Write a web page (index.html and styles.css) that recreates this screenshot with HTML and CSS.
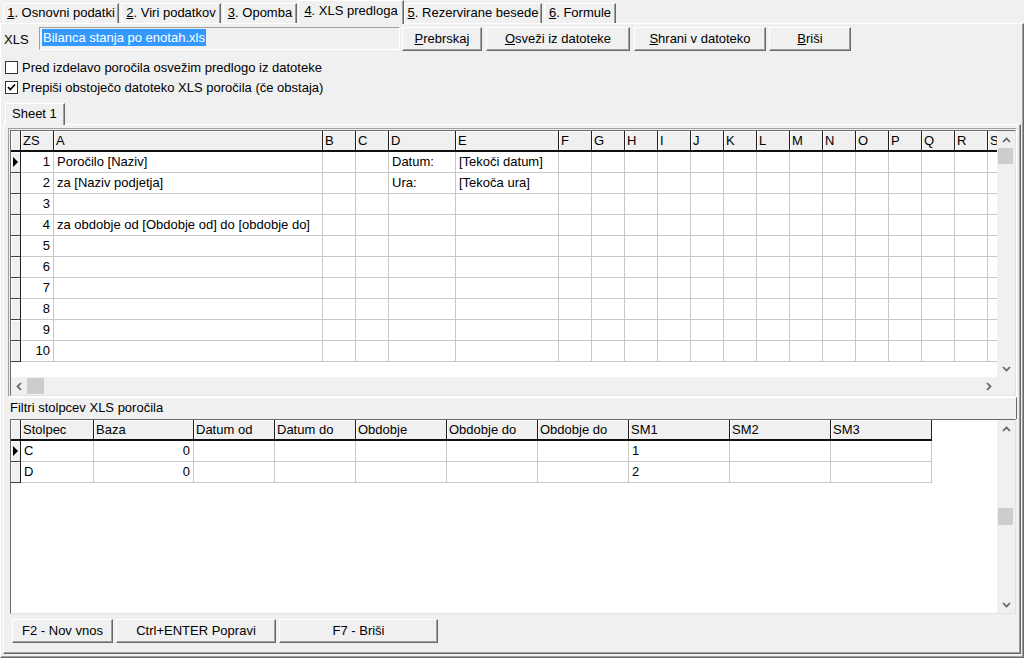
FILE: index.html
```html
<!DOCTYPE html>
<html lang="sl">
<head>
<meta charset="utf-8">
<title>XLS predloga</title>
<link rel="stylesheet" href="styles.css">
</head>
<body>
<div class="app">
  <div class="tabs">
    <div class="tab t1"><u>1</u>. Osnovni podatki</div>
    <div class="tab t2"><u>2</u>. Viri podatkov</div>
    <div class="tab t3"><u>3</u>. Opomba</div>
    <div class="tab t4 active"><u>4</u>. XLS predloga</div>
    <div class="tab t5"><u>5</u>. Rezervirane besede</div>
    <div class="tab t6"><u>6</u>. Formule</div>
  </div>
  <div class="page">
    <div class="xls-row">
      <span class="xls-label">XLS</span>
      <div class="edit"><span class="sel">Bilanca stanja po enotah.xls</span></div>
      <div class="btn b-prebrskaj"><u>P</u>rebrskaj</div>
      <div class="btn b-osvezi"><u>O</u>sveži iz datoteke</div>
      <div class="btn b-shrani"><u>S</u>hrani v datoteko</div>
      <div class="btn b-brisi"><u>B</u>riši</div>
    </div>
    <div class="checks">
      <div class="chk"><span class="box"></span>Pred izdelavo poročila osvežim predlogo iz datoteke</div>
      <div class="chk"><span class="box"><svg width="11" height="11" viewBox="0 0 11 11"><path d="M2 5 L4.3 7.5 L9 2.5" fill="none" stroke="#000" stroke-width="1.8"/></svg></span>Prepiši obstoječo datoteko XLS poročila (če obstaja)</div>
    </div>
    <div class="sheet-ctrl">
      <div class="sheet-tabs"><div class="stab">Sheet 1</div></div>
      <div class="sheet-body">
        <div class="grid1">
          <div class="g-pad">
            <div class="g1-inner">
              <div class="cells">
                <table class="dg dg1">
                  <colgroup>
                    <col class="c-ind"><col class="c33"><col class="c-a"><col class="c33"><col class="c33"><col class="c-d"><col class="c-e">
                    <col class="c33"><col class="c33"><col class="c33"><col class="c33"><col class="c33"><col class="c33"><col class="c33">
                    <col class="c33"><col class="c33"><col class="c33"><col class="c33"><col class="c33"><col class="c33"><col class="c33">
                  </colgroup>
                  <thead>
                    <tr><th class="ind"></th><th>ZS</th><th>A</th><th>B</th><th>C</th><th>D</th><th>E</th><th>F</th><th>G</th><th>H</th><th>I</th><th>J</th><th>K</th><th>L</th><th>M</th><th>N</th><th>O</th><th>P</th><th>Q</th><th>R</th><th>S</th></tr>
                  </thead>
                  <tbody>
                    <tr><td class="ind"><svg class="tri" width="5" height="10" viewBox="0 0 5 10"><polygon points="0,0 5,5 0,10" fill="#000"/></svg></td><td class="num">1</td><td>Poročilo [Naziv]</td><td></td><td></td><td>Datum:</td><td>[Tekoči datum]</td><td></td><td></td><td></td><td></td><td></td><td></td><td></td><td></td><td></td><td></td><td></td><td></td><td></td><td></td></tr>
                    <tr><td class="ind"></td><td class="num">2</td><td>za [Naziv podjetja]</td><td></td><td></td><td>Ura:</td><td>[Tekoča ura]</td><td></td><td></td><td></td><td></td><td></td><td></td><td></td><td></td><td></td><td></td><td></td><td></td><td></td><td></td></tr>
                    <tr><td class="ind"></td><td class="num">3</td><td></td><td></td><td></td><td></td><td></td><td></td><td></td><td></td><td></td><td></td><td></td><td></td><td></td><td></td><td></td><td></td><td></td><td></td><td></td></tr>
                    <tr><td class="ind"></td><td class="num">4</td><td>za obdobje od [Obdobje od] do [obdobje do]</td><td></td><td></td><td></td><td></td><td></td><td></td><td></td><td></td><td></td><td></td><td></td><td></td><td></td><td></td><td></td><td></td><td></td><td></td></tr>
                    <tr><td class="ind"></td><td class="num">5</td><td></td><td></td><td></td><td></td><td></td><td></td><td></td><td></td><td></td><td></td><td></td><td></td><td></td><td></td><td></td><td></td><td></td><td></td><td></td></tr>
                    <tr><td class="ind"></td><td class="num">6</td><td></td><td></td><td></td><td></td><td></td><td></td><td></td><td></td><td></td><td></td><td></td><td></td><td></td><td></td><td></td><td></td><td></td><td></td><td></td></tr>
                    <tr><td class="ind"></td><td class="num">7</td><td></td><td></td><td></td><td></td><td></td><td></td><td></td><td></td><td></td><td></td><td></td><td></td><td></td><td></td><td></td><td></td><td></td><td></td><td></td></tr>
                    <tr><td class="ind"></td><td class="num">8</td><td></td><td></td><td></td><td></td><td></td><td></td><td></td><td></td><td></td><td></td><td></td><td></td><td></td><td></td><td></td><td></td><td></td><td></td><td></td></tr>
                    <tr><td class="ind"></td><td class="num">9</td><td></td><td></td><td></td><td></td><td></td><td></td><td></td><td></td><td></td><td></td><td></td><td></td><td></td><td></td><td></td><td></td><td></td><td></td><td></td></tr>
                    <tr><td class="ind"></td><td class="num">10</td><td></td><td></td><td></td><td></td><td></td><td></td><td></td><td></td><td></td><td></td><td></td><td></td><td></td><td></td><td></td><td></td><td></td><td></td><td></td></tr>
                  </tbody>
                </table>
              </div>
              <div class="vscroll vs1">
                <div class="arrbox"><svg width="9" height="6" viewBox="0 0 9 6"><path d="M1 5 L4.5 1.5 L8 5" fill="none" stroke="#606060" stroke-width="1.7"/></svg></div>
                <div class="vthumb vt1"></div>
                <div class="spacer"></div>
                <div class="arrbox"><svg width="9" height="6" viewBox="0 0 9 6"><path d="M1 1 L4.5 4.5 L8 1" fill="none" stroke="#606060" stroke-width="1.7"/></svg></div>
              </div>
              <div class="hscroll">
                <div class="harrbox"><svg width="6" height="9" viewBox="0 0 6 9"><path d="M5 1 L1.5 4.5 L5 8" fill="none" stroke="#606060" stroke-width="1.7"/></svg></div>
                <div class="hthumb"></div>
                <div class="spacer"></div>
                <div class="harrbox"><svg width="6" height="9" viewBox="0 0 6 9"><path d="M1 1 L4.5 4.5 L1 8" fill="none" stroke="#606060" stroke-width="1.7"/></svg></div>
              </div>
              <div class="corner"></div>
            </div>
          </div>
        </div>
        <div class="filter-bar">Filtri stolpcev XLS poročila</div>
        <div class="grid2">
          <div class="g2-inner">
            <div class="cells">
              <table class="dg dg2">
                <colgroup>
                  <col class="c-ind"><col class="c73"><col class="c100"><col class="c81"><col class="c81"><col class="c91"><col class="c91"><col class="c91"><col class="c101"><col class="c101"><col class="c101">
                </colgroup>
                <thead>
                  <tr><th class="ind"></th><th>Stolpec</th><th>Baza</th><th>Datum od</th><th>Datum do</th><th>Obdobje</th><th>Obdobje do</th><th>Obdobje do</th><th>SM1</th><th>SM2</th><th>SM3</th></tr>
                </thead>
                <tbody>
                  <tr><td class="ind"><svg class="tri" width="5" height="10" viewBox="0 0 5 10"><polygon points="0,0 5,5 0,10" fill="#000"/></svg></td><td>C</td><td class="num">0</td><td></td><td></td><td></td><td></td><td></td><td>1</td><td></td><td></td></tr>
                  <tr><td class="ind"></td><td>D</td><td class="num">0</td><td></td><td></td><td></td><td></td><td></td><td>2</td><td></td><td></td></tr>
                </tbody>
              </table>
            </div>
            <div class="vscroll vs2">
              <div class="arrbox"><svg width="9" height="6" viewBox="0 0 9 6"><path d="M1 5 L4.5 1.5 L8 5" fill="none" stroke="#606060" stroke-width="1.7"/></svg></div>
              <div class="vthumb vt2"></div>
              <div class="spacer"></div>
              <div class="arrbox"><svg width="9" height="6" viewBox="0 0 9 6"><path d="M1 1 L4.5 4.5 L8 1" fill="none" stroke="#606060" stroke-width="1.7"/></svg></div>
            </div>
          </div>
        </div>
        <div class="btn-bar">
          <div class="btn b-f2">F2 - Nov vnos</div>
          <div class="btn b-ctrl">Ctrl+ENTER Popravi</div>
          <div class="btn b-f7">F7 - Briši</div>
        </div>
      </div>
    </div>
  </div>
</div>
</body>
</html>
```

FILE: styles.css
```css
* { box-sizing: border-box; }
html, body { margin: 0; padding: 0; }
body {
  width: 1024px; height: 658px; overflow: hidden;
  background: #f0f0f0; color: #000;
  font-family: "Liberation Sans", Arial, sans-serif; font-size: 13px;
}
.app { width: 1024px; height: 658px; display: flex; flex-direction: column; }

/* top tabs */
.tabs { height: 23px; display: flex; align-items: flex-end; padding-left: 3px; }
.tab {
  height: 20px; line-height: 18px; text-align: center; white-space: nowrap;
  border-top: 1px solid #fff; border-left: 1px solid #fff; border-right: 1px solid #696969;
  box-shadow: inset -1px 0 #a0a0a0;
  margin-right: 2px;
}
.tab.active {
  height: 24px; line-height: 20px; margin-bottom: -1px; margin-left: -1px; margin-right: 0;
  background: #f0f0f0; position: relative; z-index: 2;
}
.t1 { width: 116px; }
.t2 { width: 100px; }
.t3 { width: 74px; }
.t4 { width: 106px; }
.t5 { width: 138px; }
.t6 { width: 72px; }

.page {
  flex: 1; display: flex; flex-direction: column;
  border-top: 1px solid #fff; border-left: 1px solid #fff;
  border-right: 1px solid #696969; border-bottom: 1px solid #696969;
  box-shadow: inset -1px -1px #a0a0a0;
  padding: 3px 2px 3px 2px;
}

/* XLS row */
.xls-row { height: 24px; display: flex; align-items: center; }
.xls-label { width: 36px; padding-left: 1px; }
.edit {
  width: 361px; height: 23px; margin-top: -1px;
  border: 1px solid; border-color: #a0a0a0 #fff #fff #a0a0a0;
  padding: 1px 2px;
}
.sel { display: inline-block; background: #3399ff; color: #fff; line-height: 17px; padding: 0 1px; }
.btn {
  height: 24px; line-height: 22px; text-align: center; white-space: nowrap;
  border: 1px solid; border-color: #fff #696969 #696969 #fff;
  box-shadow: inset -1px -1px #a0a0a0;
  background: #f0f0f0;
}
.b-prebrskaj { width: 80px; margin-left: 2px; }
.b-osvezi { width: 144px; margin-left: 4px; }
.b-shrani { width: 132px; margin-left: 4px; }
.b-brisi { width: 82px; margin-left: 3px; }

/* checkboxes */
.checks { margin-top: 6px; }
.chk { height: 20px; display: flex; align-items: center; padding-left: 2px; }
.box {
  width: 13px; height: 13px; margin-right: 4px; background: #fff;
  border: 1px solid #333; display: flex; align-items: center; justify-content: center;
}

/* sheet control */
.sheet-ctrl { flex: 1; display: flex; flex-direction: column; margin-top: 4px; }
.sheet-tabs { height: 23px; display: flex; align-items: flex-end; padding-left: 2px; }
.stab {
  width: 60px; height: 22px; line-height: 19px; padding-left: 6px; margin-bottom: -1px;
  border-top: 1px solid #fff; border-left: 1px solid #fff; border-right: 1px solid #696969;
  box-shadow: inset -1px 0 #a0a0a0;
  background: #f0f0f0; position: relative; z-index: 2;
}
.sheet-body {
  flex: 1; display: flex; flex-direction: column;
  border: 1px solid; border-color: #fff #696969 #696969 #fff;
  box-shadow: inset -1px -1px #a0a0a0;
  padding: 3px 1px 3px 4px;
}

/* grid 1 */
.grid1 {
  width: 1009px; height: 269px;
  border: 1px solid; border-color: #a0a0a0 #fff #fff #a0a0a0;
  padding: 1px 0 0 1px;
}
.g-pad { width: 100%; height: 100%; border: 1px solid; border-color: #696969 #e3e3e3 #e3e3e3 #696969; }
.g1-inner {
  display: grid; grid-template-columns: 986px 18px; grid-template-rows: 246px 18px;
}
.cells { background: #fff; overflow: hidden; }

.dg { table-layout: fixed; border-collapse: separate; border-spacing: 0; }
.dg1 { width: 1010px; }
.dg2 { width: 921px; }
.c-ind { width: 10px; }
.c33 { width: 33px; }
.c-a { width: 269px; }
.c-d { width: 67px; }
.c-e { width: 103px; }
.c73 { width: 73px; }
.c100 { width: 100px; }
.c81 { width: 81px; }
.c91 { width: 91px; }
.c101 { width: 101px; }

.dg th {
  height: 21px; line-height: 19px; padding: 0 0 0 2px; text-align: left; font-weight: normal;
  background: #f0f0f0; white-space: nowrap; overflow: hidden;
  border-right: 1px solid #202020; border-bottom: 2px solid #101010;
  box-shadow: inset 1px 1px #fff;
}
.dg td {
  height: 21px; line-height: 20px; padding: 0 0 0 3px; white-space: nowrap; overflow: hidden;
  border-right: 1px solid #c8c8c8; border-bottom: 1px solid #c8c8c8;
}
.dg td.num { text-align: right; padding: 0 3px 0 0; }
.dg td.ind {
  background: #f0f0f0; padding: 0;
  border-right: 1px solid #202020; border-bottom: 1px solid #404040;
  box-shadow: inset 1px 1px #fff;
  vertical-align: middle;
}
.dg th.ind { padding: 0; }
.tri { display: block; margin-left: 2px; }

/* scrollbars */
.vscroll { background: #f0f0f0; display: flex; flex-direction: column; align-items: center; }
.arrbox { width: 18px; height: 17px; display: flex; align-items: center; justify-content: center; }
.vthumb { width: 15px; height: 16px; background: #cdcdcd; margin-left: -2px; }
.vt2 { margin-top: 71px; height: 17px; }
.spacer { flex: 1; }
.hscroll { background: #f0f0f0; display: flex; align-items: center; }
.harrbox { width: 16px; height: 18px; display: flex; align-items: center; justify-content: center; }
.hthumb { width: 17px; height: 16px; background: #cdcdcd; }
.corner { background: #f0f0f0; }

/* filter bar */
.filter-bar {
  height: 22px; line-height: 20px; padding-left: 2px; width: 1009px;
  border-top: 1px solid #fff; border-right: 1px solid #696969;
}

/* grid 2 */
.grid2 {
  width: 1006px; height: 195px; margin-left: 2px;
  border: 1px solid; border-color: #696969 #e3e3e3 #e3e3e3 #696969;
}
.g2-inner { display: grid; grid-template-columns: 986px 18px; grid-template-rows: 193px; }

/* bottom buttons */
.btn-bar { height: 33px; display: flex; align-items: flex-start; padding-top: 5px; padding-left: 4px; }
.b-f2 { width: 101px; }
.b-ctrl { width: 160px; margin-left: 3px; }
.b-f7 { width: 159px; margin-left: 3px; }
```
